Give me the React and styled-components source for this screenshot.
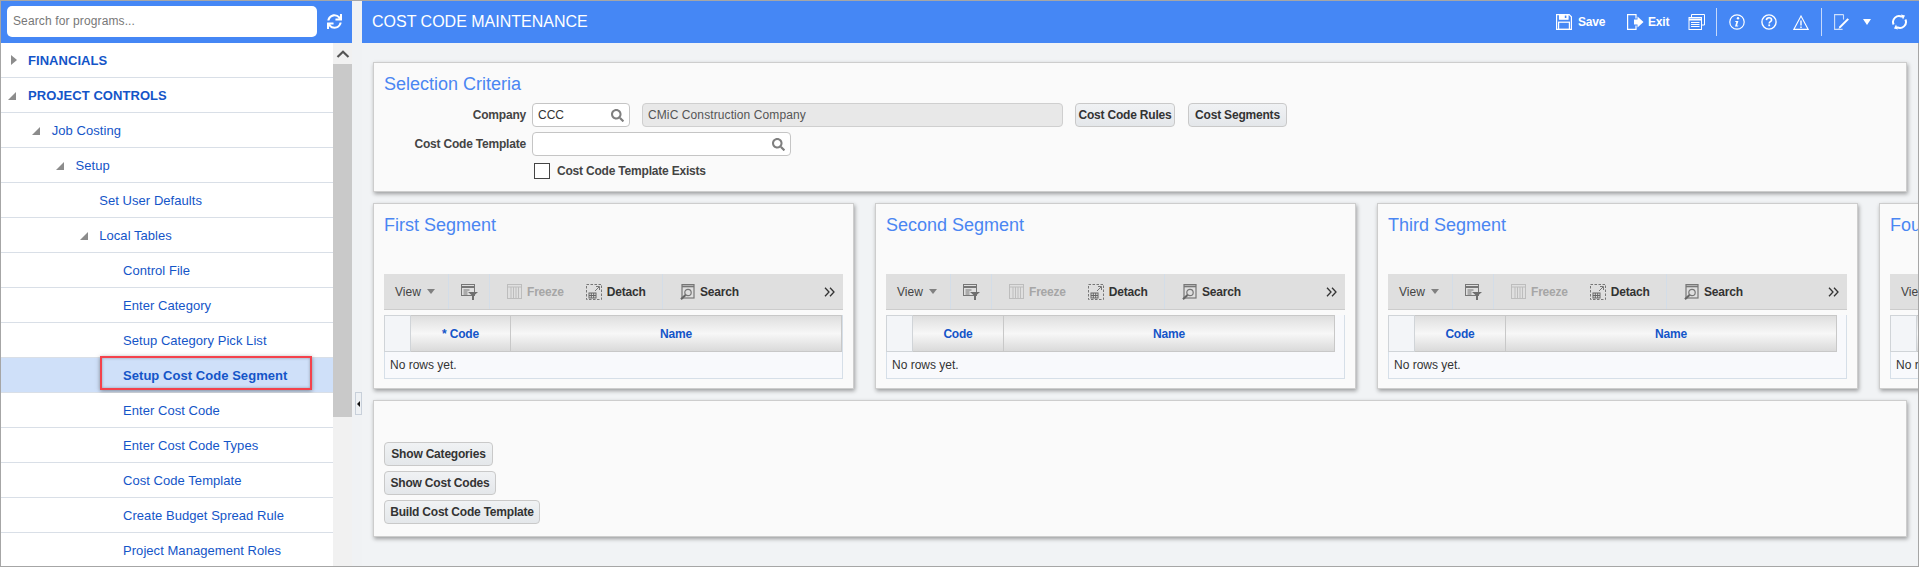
import React from "react";
import styled, { createGlobalStyle } from "styled-components";
import { FaSync, FaSearch } from "react-icons/fa";

const GlobalStyle = createGlobalStyle`
  html, body {
    margin: 0;
    padding: 0;
    background: #f1f3f5;
  }
  * {
    box-sizing: border-box;
  }
`;

const navItems = [
  { label: "FINANCIALS", level: 0, arrow: "closed", top: true },
  { label: "PROJECT CONTROLS", level: 0, arrow: "open", top: true },
  { label: "Job Costing", level: 1, arrow: "open" },
  { label: "Setup", level: 2, arrow: "open" },
  { label: "Set User Defaults", level: 3 },
  { label: "Local Tables", level: 3, arrow: "open" },
  { label: "Control File", level: 4 },
  { label: "Enter Category", level: 4 },
  { label: "Setup Category Pick List", level: 4 },
  { label: "Setup Cost Code Segment", level: 4, selected: true },
  { label: "Enter Cost Code", level: 4 },
  { label: "Enter Cost Code Types", level: 4 },
  { label: "Cost Code Template", level: 4 },
  { label: "Create Budget Spread Rule", level: 4 },
  { label: "Project Management Roles", level: 4 },
];

const segments = [
  { title: "First Segment", code: "* Code", codeWidth: 100, nameWidth: 331 },
  { title: "Second Segment", code: "Code", codeWidth: 91, nameWidth: 331 },
  { title: "Third Segment", code: "Code", codeWidth: 91, nameWidth: 331 },
  { title: "Fourth Segment", code: "Code", codeWidth: 91, nameWidth: 331 },
];

const SaveIcon = () => (
  <svg width="16" height="16" viewBox="0 0 16 16" fill="none" stroke="#fff" strokeWidth="1.2">
    <path d="M.6.6h12.6l2.2 2.2v12.6H.6z" />
    <path d="M3.5.6v4.6h8.500V.6" fill="#fff" />
    <rect x="2.600" y="8.200" width="10.800" height="7.200" />
    <path d="M9.600 1.600v2.400" stroke="#4587f5" strokeWidth="1.600" />
  </svg>
);

const ExitIcon = () => (
  <svg width="17" height="16" viewBox="0 0 17 16" fill="none">
    <path d="M9 4.500V.6H.6v14.800H9v-4" stroke="#fff" strokeWidth="1.200" />
    <path d="M7 5.500h3.500V2.500l6 5.500-6 5.500v-3H7z" fill="#fff" />
  </svg>
);

const PrintIcon = () => (
  <svg width="17" height="16" viewBox="0 0 17 16" fill="none" stroke="#fff">
    <path d="M3.500 3V.5h13v10.500H14" />
    <rect x="1" y="3.500" width="12.500" height="12" fill="#4587f5" />
    <path d="M1 5.500h12.500" strokeWidth="2" />
    <path d="M3 8.500h8.500M3 10.500h8.500M3 12.500h8.500" />
  </svg>
);

const InfoIcon = () => (
  <svg width="16" height="16" viewBox="0 0 16 16" fill="none">
    <circle cx="8" cy="8" r="7.200" stroke="#fff" strokeWidth="1.200" />
    <circle cx="9" cy="4.200" r="1.200" fill="#fff" />
    <path d="M6.400 7h3L8 11.600h1.400l-.4 1H6l1.300-4.600H6.200z" fill="#fff" />
  </svg>
);

const HelpIcon = () => (
  <svg width="16" height="16" viewBox="0 0 16 16" fill="none">
    <circle cx="8" cy="8" r="7.100" stroke="#fff" strokeWidth="1.400" />
    <path d="M5.400 6.100C5.500 4.500 6.600 3.800 8 3.800c1.500 0 2.600.9 2.600 2.100 0 1.800-2.400 1.800-2.400 3.500" stroke="#fff" strokeWidth="1.600" />
    <rect x="7.300" y="10.400" width="1.800" height="1.800" fill="#fff" />
  </svg>
);

const WarnIcon = () => (
  <svg width="16" height="15" viewBox="0 0 16 15" fill="none">
    <path d="M8 1 .8 14.400h14.400z" stroke="#fff" strokeWidth="1.100" />
    <path d="M7.300 5.500h1.400v5H7.300zM7.300 11.500h1.400v1.500H7.300z" fill="#fff" />
  </svg>
);

const EditIcon = () => (
  <svg width="16" height="16" viewBox="0 0 16 16" fill="none">
    <path d="M9.500.6H.6v14.800h8" stroke="#cfe0fb" strokeWidth="1.100" />
    <path d="M9.500.6v5" stroke="#cfe0fb" strokeWidth="1.100" />
    <path d="M15 5.500 7 13.500l-2.500 1.500 1-2.800 8-8z" fill="#fff" />
  </svg>
);

const ReloadIcon = () => (
  <svg width="17" height="16" viewBox="0 0 17 16" fill="none">
    <path d="M2.600 10.500A6 6 0 0 1 11 2.800" stroke="#fff" strokeWidth="2" />
    <path d="M14.400 5.500A6 6 0 0 1 6 13.200" stroke="#fff" strokeWidth="2" />
    <path d="M10 .5 14 1.500 12 5.500zM7 15.500 3 14.500 5 10.500z" fill="#fff" />
  </svg>
);

const FilterIcon = () => (
  <svg width="17" height="16" viewBox="0 0 17 16" fill="none">
    <rect x=".5" y=".5" width="13" height="11" stroke="#777" />
    <path d="M.5 3h13" stroke="#777" strokeWidth="2" />
    <path d="M2.500 6h6M2.500 8h4M2.500 10h4" stroke="#777" />
    <path d="M7 8h10l-4 3.500V16h-2v-4.500z" fill="#6f6f6f" />
  </svg>
);

const FreezeIcon = () => (
  <svg width="15" height="15" viewBox="0 0 15 15" fill="none" stroke="#bdbdbd">
    <rect x=".5" y=".5" width="14" height="14" />
    <path d="M.5 3h14M4 3v11M6.500 3v11M9 3v11M11.500 3v11" />
  </svg>
);

const DetachIcon = () => (
  <svg width="16" height="16" viewBox="0 0 16 16" fill="none">
    <rect x=".5" y=".5" width="15" height="15" stroke="#777" strokeDasharray="2.500 1.500" />
    <path d="M9 7l4-4M10 2.500h3.500V6" stroke="#777" />
    <rect x="3" y="9" width="7" height="5" stroke="#666" />
    <path d="M3 11.500h7M5.300 9v5M7.700 9v5" stroke="#666" />
  </svg>
);

const SearchPanelIcon = () => (
  <svg width="15" height="16" viewBox="0 0 15 16" fill="none">
    <rect x="2" y=".6" width="12" height="13.400" stroke="#777" strokeWidth="1.200" />
    <path d="M2 2.500h12" stroke="#777" strokeWidth="1.600" />
    <circle cx="8" cy="8.500" r="3.200" stroke="#777" strokeWidth="1.200" />
    <path d="M5.500 11 1 15.300" stroke="#666" strokeWidth="2" />
  </svg>
);

const App = () => (
  <>
    <GlobalStyle />
    <Page>
      <Sidebar>
        <SearchBar>
          <SearchInput placeholder="Search for programs..." />
          <RefreshButton>
            <FaSync />
          </RefreshButton>
        </SearchBar>
        <NavArea>
          <NavList>
            {navItems.map((item) => (
              <NavRow key={item.label} $selected={item.selected}>
                <NavIndent $level={item.level}>
                  {item.arrow === "closed" && <ArrowClosed />}
                  {item.arrow === "open" && <ArrowOpen />}
                </NavIndent>
                <NavLabel $top={item.top} $selected={item.selected}>
                  {item.label}
                </NavLabel>
                {item.selected && <Callout />}
              </NavRow>
            ))}
          </NavList>
          <ScrollBar>
            <ScrollUp>
              <svg width="14" height="8" viewBox="0 0 14 8" fill="none">
                <path d="M1.500 7 7 1.800 12.500 7" stroke="#555" strokeWidth="2.200" />
              </svg>
            </ScrollUp>
            <ScrollThumb />
          </ScrollBar>
        </NavArea>
      </Sidebar>
      <Splitter>
        <SplitHandle>
          <HandleArrow />
        </SplitHandle>
      </Splitter>
      <Main>
        <TopBar>
          <PageTitle>Cost Code Maintenance</PageTitle>
          <TopActions>
            <TopAction $width={71} $gap={6}>
              <SaveIcon />
              <span>Save</span>
            </TopAction>
            <TopAction $width={61} $gap={4}>
              <ExitIcon />
              <span>Exit</span>
            </TopAction>
            <TopIcon $width={28}>
              <PrintIcon />
            </TopIcon>
            <TopSep />
            <TopIcon $width={32} $first>
              <InfoIcon />
            </TopIcon>
            <TopIcon $width={32}>
              <HelpIcon />
            </TopIcon>
            <TopIcon $width={28}>
              <WarnIcon />
            </TopIcon>
            <TopSep />
            <TopIcon $width={29} $first>
              <EditIcon />
            </TopIcon>
            <TopCaret />
            <TopIcon $width={17}>
              <ReloadIcon />
            </TopIcon>
          </TopActions>
        </TopBar>
        <Content>
          <CriteriaPanel>
            <PanelTitle>Selection Criteria</PanelTitle>
            <FormGrid>
              <FieldLabel>Company</FieldLabel>
              <FieldRow>
                <LookupBox $width={98}>
                  <span>CCC</span>
                  <FaSearch />
                </LookupBox>
                <ReadonlyBox>CMiC Construction Company</ReadonlyBox>
                <GrayButton $width={100}>Cost Code Rules</GrayButton>
                <GrayButton $width={99}>Cost Segments</GrayButton>
              </FieldRow>
              <FieldLabel>Cost Code Template</FieldLabel>
              <FieldRow>
                <LookupBox $width={259}>
                  <span />
                  <FaSearch />
                </LookupBox>
              </FieldRow>
              <span />
              <CheckRow>
                <CheckBox />
                <CheckLabel>Cost Code Template Exists</CheckLabel>
              </CheckRow>
            </FormGrid>
          </CriteriaPanel>
          <SegmentRow>
            {segments.map((seg) => (
              <SegmentPanel key={seg.title}>
                <SegmentTitle>{seg.title}</SegmentTitle>
                <TableToolbar>
                  <ToolGroup $width={65}>
                    <ViewLabel>View</ViewLabel>
                    <ViewCaret />
                  </ToolGroup>
                  <ToolGroup $width={41} $center>
                    <FilterIcon />
                  </ToolGroup>
                  <ToolGroup $width={173} $pad={17}>
                    <FreezeIcon />
                    <ToolText $off>Freeze</ToolText>
                    <DetachGap />
                    <DetachIcon />
                    <ToolText>Detach</ToolText>
                  </ToolGroup>
                  <ToolGroup $width={160} $pad={17} $last>
                    <SearchPanelIcon />
                    <ToolText>Search</ToolText>
                  </ToolGroup>
                  <MoreIcon>
                    <svg width="11" height="10" viewBox="0 0 11 10" fill="none">
                      <path d="M1 .7 5 5 1 9.300M6 .7 10 5 6 9.300" stroke="#333" strokeWidth="1.300" />
                    </svg>
                  </MoreIcon>
                </TableToolbar>
                <DataTable>
                  <HeadRow>
                    <CornerCell />
                    <HeadCell $width={seg.codeWidth}>{seg.code}</HeadCell>
                    <HeadCell $width={seg.nameWidth}>Name</HeadCell>
                  </HeadRow>
                  <EmptyRow>No rows yet.</EmptyRow>
                </DataTable>
              </SegmentPanel>
            ))}
          </SegmentRow>
          <ActionsPanel>
            <GrayButton $width={109}>Show Categories</GrayButton>
            <GrayButton $width={112}>Show Cost Codes</GrayButton>
            <GrayButton $width={156}>Build Cost Code Template</GrayButton>
          </ActionsPanel>
        </Content>
      </Main>
    </Page>
  </>
);

const Page = styled.div`
  display: flex;
  width: 1919px;
  height: 567px;
  overflow: hidden;
  border: 1px solid #a6a6a6;
  border-right: 0;
  background: #f1f3f5;
  font-family: "Liberation Sans", Arial, sans-serif;
`;

const Sidebar = styled.div`
  display: flex;
  flex-direction: column;
  flex: none;
  width: 351px;
  background: #fff;
`;

const SearchBar = styled.div`
  display: flex;
  align-items: center;
  flex: none;
  height: 42px;
  padding: 0 0 2px 6px;
  background: #4587f5;
`;

const SearchInput = styled.input`
  width: 310px;
  height: 31px;
  padding: 0 6px;
  border: 0;
  border-radius: 5px;
  background: #fff;
  font: 12px "Liberation Sans", Arial, sans-serif;
  letter-spacing: 0.12px;
  outline: none;

  &::placeholder {
    color: #777;
    opacity: 1;
  }
`;

const RefreshButton = styled.div`
  display: flex;
  margin-left: 10px;
  color: #fff;
  font-size: 15px;
`;

const NavArea = styled.div`
  display: flex;
  flex: 1;
  min-height: 0;
`;

const NavList = styled.div`
  flex: 1;
  min-width: 0;
  overflow: hidden;
`;

const NavRow = styled.div`
  position: relative;
  display: flex;
  align-items: center;
  height: 35px;
  flex: none;
  border-bottom: 1px solid #d9dfe7;
  background: ${(p) => (p.$selected ? "#cfe0f9" : "#fff")};
`;

const NavIndent = styled.div`
  display: flex;
  align-items: center;
  flex: none;
  width: ${(p) => 27 + p.$level * 23.75}px;
  padding-left: ${(p) => 7 + p.$level * 24}px;
`;

const ArrowClosed = styled.div`
  width: 0;
  height: 0;
  border-left: 6px solid #8c8c8c;
  border-top: 5px solid transparent;
  border-bottom: 5px solid transparent;
  margin-left: 3px;
`;

const ArrowOpen = styled.div`
  width: 0;
  height: 0;
  border-bottom: 8px solid #8c8c8c;
  border-left: 8px solid transparent;
  margin-top: 2px;
`;

const NavLabel = styled.span`
  color: #1455c8;
  font-size: 13px;
  font-weight: ${(p) => (p.$selected || p.$top ? 700 : 400)};
  letter-spacing: 0.05px;
`;

const Callout = styled.div`
  position: absolute;
  left: 99px;
  top: -2px;
  width: 212px;
  height: 34px;
  border: 2px solid #f4424c;
  box-shadow: 0 1px 4px rgba(60, 60, 60, 0.55), inset 0 0 3px rgba(60, 60, 60, 0.4);
`;

const ScrollBar = styled.div`
  display: flex;
  flex-direction: column;
  flex: none;
  width: 19px;
  background: #f1f1f1;
`;

const ScrollUp = styled.div`
  display: flex;
  align-items: center;
  justify-content: center;
  flex: none;
  height: 21px;
`;

const ScrollThumb = styled.div`
  flex: none;
  height: 353px;
  background: #c9c9c9;
`;

const Splitter = styled.div`
  display: flex;
  align-items: center;
  flex: none;
  position: relative;
  width: 10px;
  background: #f0f2f4;
`;

const SplitHandle = styled.div`
  position: absolute;
  top: 391px;
  left: 3px;
  display: flex;
  align-items: center;
  justify-content: center;
  width: 7px;
  height: 23px;
  border: 1px solid #c8d0da;
  background: #eef1f4;
`;

const HandleArrow = styled.div`
  width: 0;
  height: 0;
  border-right: 3px solid #111;
  border-top: 3px solid transparent;
  border-bottom: 3px solid transparent;
`;

const Main = styled.div`
  display: flex;
  flex-direction: column;
  flex: 1;
  min-width: 0;
`;

const TopBar = styled.div`
  display: flex;
  align-items: center;
  justify-content: space-between;
  flex: none;
  height: 42px;
  padding: 0 11px 0 10px;
  background: #4587f5;
  color: #fff;
`;

const PageTitle = styled.div`
  font-size: 16px;
  text-transform: uppercase;
`;

const TopActions = styled.div`
  display: flex;
  align-items: center;
`;

const TopAction = styled.div`
  display: flex;
  align-items: center;
  gap: ${(p) => p.$gap}px;
  width: ${(p) => p.$width}px;
  font-size: 12px;
  font-weight: 700;
  letter-spacing: -0.2px;
`;

const TopIcon = styled.div`
  display: flex;
  align-items: center;
  width: ${(p) => p.$width}px;
  margin-left: ${(p) => (p.$first ? 12 : 0)}px;
`;

const TopSep = styled.div`
  width: 1px;
  height: 28px;
  background: #c6d9fb;
`;

const TopCaret = styled.div`
  width: 0;
  height: 0;
  margin-right: 20px;
  border-top: 6px solid #fff;
  border-left: 4.5px solid transparent;
  border-right: 4.5px solid transparent;
`;

const Content = styled.div`
  display: flex;
  flex-direction: column;
  flex: 1;
  min-height: 0;
  padding: 19px 0 0 11px;
  border-right: 1px solid #a6a6a6;
  overflow: hidden;
`;

const panel = `
  border: 1px solid #cdcdcd;
  background: #fafafa;
  box-shadow: 1px 2px 4px rgba(0, 0, 0, 0.35);
`;

const CriteriaPanel = styled.div`
  ${panel}
  flex: none;
  width: 1534px;
  height: 130px;
  padding: 11px 10px;
`;

const PanelTitle = styled.div`
  height: 29px;
  color: #4a86f2;
  font-size: 18px;
`;

const FormGrid = styled.div`
  display: grid;
  grid-template-columns: 143px 1fr;
  grid-auto-rows: 24px;
  column-gap: 5px;
  row-gap: 5px;
  align-items: center;
`;

const FieldLabel = styled.div`
  padding-right: 1px;
  color: #444;
  font-size: 12px;
  font-weight: 700;
  letter-spacing: -0.2px;
  text-align: right;
`;

const FieldRow = styled.div`
  display: flex;
  align-items: center;
`;

const LookupBox = styled.div`
  display: flex;
  align-items: center;
  justify-content: space-between;
  flex: none;
  width: ${(p) => p.$width}px;
  height: 24px;
  padding: 0 5px;
  border: 1px solid #c5c5c5;
  border-radius: 4px;
  background: #fff;
  color: #333;
  font-size: 12px;

  svg {
    color: #7f7f7f;
    font-size: 13px;
  }
`;

const ReadonlyBox = styled.div`
  display: flex;
  align-items: center;
  flex: none;
  width: 421px;
  height: 24px;
  margin: 0 12px;
  padding: 0 5px;
  border: 1px solid #cfcfcf;
  border-radius: 4px;
  background: #e8e8e8;
  color: #555;
  font-size: 12px;
  letter-spacing: 0.1px;
`;

const GrayButton = styled.div`
  display: flex;
  align-items: center;
  justify-content: center;
  flex: none;
  width: ${(p) => p.$width}px;
  height: 24px;
  margin-right: 13px;
  border: 1px solid #c9c9c9;
  border-radius: 4px;
  background: linear-gradient(#f0f2f4, #e4e7ea);
  color: #333;
  font-size: 12px;
  font-weight: 700;
  letter-spacing: -0.2px;
`;

const CheckRow = styled.div`
  display: flex;
  align-items: center;
  margin-bottom: 4px;
  padding-left: 2px;
`;

const CheckBox = styled.div`
  width: 16px;
  height: 16px;
  border: 1px solid #444;
  background: #fff;
`;

const CheckLabel = styled.div`
  margin-left: 7px;
  color: #444;
  font-size: 12px;
  font-weight: 700;
  letter-spacing: -0.2px;
`;

const SegmentRow = styled.div`
  display: flex;
  flex: none;
  gap: 21px;
  margin-top: 11px;
`;

const SegmentPanel = styled.div`
  ${panel}
  flex: none;
  width: 481px;
  height: 186px;
  padding: 11px 10px;
`;

const SegmentTitle = styled.div`
  height: 59px;
  color: #4a86f2;
  font-size: 18px;
`;

const TableToolbar = styled.div`
  display: flex;
  align-items: center;
  height: 36px;
  border-bottom: 1px solid #cccccc;
  background: #dfdfdf;
`;

const ToolGroup = styled.div`
  display: flex;
  align-items: center;
  justify-content: ${(p) => (p.$center ? "center" : "flex-start")};
  flex: none;
  width: ${(p) => p.$width}px;
  height: 35px;
  padding-left: ${(p) => p.$pad || 0}px;
  border-right: ${(p) => (p.$last ? "0" : "1px solid #d3dde8")};
`;

const ViewLabel = styled.span`
  margin-left: 11px;
  color: #444;
  font-size: 12px;
`;

const ViewCaret = styled.span`
  width: 0;
  height: 0;
  margin-left: 6px;
  border-top: 5px solid #808080;
  border-left: 4.500px solid transparent;
  border-right: 4.500px solid transparent;
`;

const ToolText = styled.span`
  margin-left: 5px;
  color: ${(p) => (p.$off ? "#a6a6a6" : "#333")};
  font-size: 12px;
  font-weight: 700;
  letter-spacing: -0.2px;
`;

const DetachGap = styled.span`
  width: 22px;
`;

const MoreIcon = styled.div`
  display: flex;
  margin-left: auto;
  margin-right: 8px;
`;

const DataTable = styled.div`
  margin-top: 5px;
  border: 1px solid #d6dfe8;
  border-top: 0;
  background: #f8f9fc;
`;

const HeadRow = styled.div`
  display: flex;
  height: 37px;
  margin-left: -1px;
`;

const CornerCell = styled.div`
  flex: none;
  width: 27px;
  border: 1px solid #d0d4d8;
  background: #f3f5f8;
`;

const HeadCell = styled.div`
  display: flex;
  align-items: center;
  justify-content: center;
  flex: none;
  width: ${(p) => p.$width}px;
  border: 1px solid #c8c8c8;
  border-left: 0;
  background: linear-gradient(#dedede, #f7f7f7 50%, #dadada);
  color: #1455c8;
  font-size: 12px;
  font-weight: 700;
  letter-spacing: -0.2px;
`;

const EmptyRow = styled.div`
  display: flex;
  align-items: center;
  height: 26px;
  padding-left: 5px;
  color: #333;
  font-size: 12px;
`;

const ActionsPanel = styled.div`
  ${panel}
  display: flex;
  flex-direction: column;
  justify-content: flex-end;
  gap: 5px;
  flex: none;
  width: 1534px;
  height: 137px;
  margin-top: 11px;
  padding: 0 10px 12px;
`;

export default App;
